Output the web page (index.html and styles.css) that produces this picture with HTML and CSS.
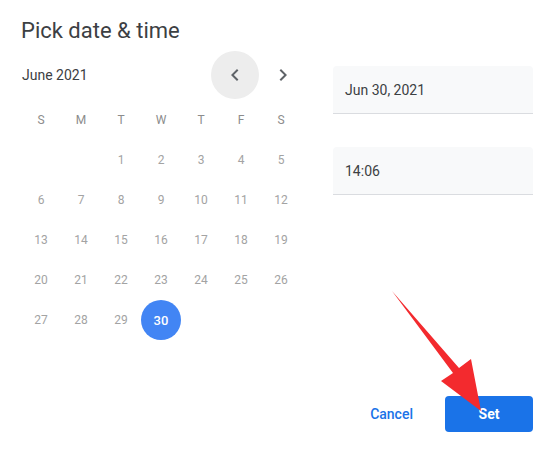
FILE: index.html
```html
<!DOCTYPE html>
<html>
<head>
<meta charset="utf-8">
<link rel="stylesheet" href="styles.css">
</head>
<body>
<div class="dialog">
  <div class="left">
    <h1 class="title">Pick date &amp; time</h1>
    <div class="month-row">
      <span class="month">June 2021</span>
      <div class="nav">
        <button class="nav-btn active" aria-label="Previous month">
          <svg width="24" height="24" viewBox="0 0 24 24"><path d="M15.41 7.41L14 6l-6 6 6 6 1.41-1.41L10.83 12z"/></svg>
        </button>
        <button class="nav-btn" aria-label="Next month">
          <svg width="24" height="24" viewBox="0 0 24 24"><path d="M10 6L8.59 7.41 13.17 12l-4.58 4.59L10 18l6-6z"/></svg>
        </button>
      </div>
    </div>
    <div class="cal">
      <div class="wd">S</div><div class="wd">M</div><div class="wd">T</div><div class="wd">W</div><div class="wd">T</div><div class="wd">F</div><div class="wd">S</div>
      <div class="day"></div><div class="day"></div><div class="day">1</div><div class="day">2</div><div class="day">3</div><div class="day">4</div><div class="day">5</div>
      <div class="day">6</div><div class="day">7</div><div class="day">8</div><div class="day">9</div><div class="day">10</div><div class="day">11</div><div class="day">12</div>
      <div class="day">13</div><div class="day">14</div><div class="day">15</div><div class="day">16</div><div class="day">17</div><div class="day">18</div><div class="day">19</div>
      <div class="day">20</div><div class="day">21</div><div class="day">22</div><div class="day">23</div><div class="day">24</div><div class="day">25</div><div class="day">26</div>
      <div class="day">27</div><div class="day">28</div><div class="day">29</div><div class="day"><span class="sel">30</span></div>
    </div>
  </div>
  <div class="right">
    <div class="field">Jun 30, 2021</div>
    <div class="field">14:06</div>
    <div class="actions">
      <button class="btn-text">Cancel</button>
      <button class="btn-primary">Set</button>
    </div>
  </div>
</div>
<svg class="arrow" width="552" height="452" viewBox="0 0 552 452">
  <polygon points="392,291 459,368 471,359 481,411 441,381 453,373" fill="#f32a2e"/>
</svg>
</body>
</html>
```
FILE: styles.css
```css
html, body {
  margin: 0;
  padding: 0;
  background: #ffffff;
}
body {
  width: 552px;
  height: 452px;
  position: relative;
  overflow: hidden;
  font-family: Roboto, "Noto Sans", Arial, sans-serif;
}
.dialog {
  display: flex;
  gap: 26px;
  height: 452px;
  box-sizing: border-box;
  padding: 0 19px 20px 21px;
}
.left {
  width: 286px;
  display: flex;
  flex-direction: column;
  padding-top: 17px;
}
.title {
  margin: 0;
  font-size: 22px;
  line-height: 28px;
  font-weight: 400;
  color: #3c4043;
}
.month-row {
  margin-top: 6px;
  height: 48px;
  display: flex;
  align-items: center;
  justify-content: space-between;
}
.month {
  font-size: 14px;
  color: #3c4043;
  padding-left: 1px;
}
.nav {
  display: flex;
}
.nav-btn {
  width: 48px;
  height: 48px;
  border: none;
  border-radius: 50%;
  background: transparent;
  padding: 0;
  display: flex;
  align-items: center;
  justify-content: center;
}
.nav-btn.active {
  background: #ededed;
}
.nav-btn svg {
  fill: #5f6368;
}
.cal {
  margin-top: 1px;
  display: grid;
  grid-template-columns: repeat(7, 40px);
  grid-auto-rows: 40px;
}
.wd, .day {
  display: flex;
  align-items: center;
  justify-content: center;
  font-size: 12px;
}
.wd {
  color: #8c8c8c;
}
.day {
  color: #a3a3a3;
}
.sel {
  width: 40px;
  height: 40px;
  border-radius: 50%;
  background: #4285f4;
  color: #ffffff;
  font-weight: 500;
  font-size: 13px;
  display: flex;
  align-items: center;
  justify-content: center;
}
.right {
  width: 200px;
  display: flex;
  flex-direction: column;
  padding-top: 66px;
  gap: 33px;
}
.field {
  height: 48px;
  box-sizing: border-box;
  background: #f8f9fa;
  border-radius: 4px 4px 0 0;
  border-bottom: 1px solid #dadce0;
  padding-left: 12px;
  display: flex;
  align-items: center;
  font-size: 14px;
  color: #3c4043;
}
.actions {
  margin-top: auto;
  display: flex;
  justify-content: flex-end;
  gap: 16px;
  width: 220px;
  margin-left: -20px;
}
.btn-text {
  height: 36px;
  border: none;
  background: transparent;
  padding: 0 16px;
  font-family: inherit;
  font-size: 14px;
  font-weight: 500;
  color: #1a73e8;
}
.btn-primary {
  width: 88px;
  height: 36px;
  border: none;
  border-radius: 4px;
  background: #1a73e8;
  color: #ffffff;
  font-family: inherit;
  font-size: 14px;
  font-weight: 700;
}
.arrow {
  position: absolute;
  left: 0;
  top: 0;
  pointer-events: none;
}
```
